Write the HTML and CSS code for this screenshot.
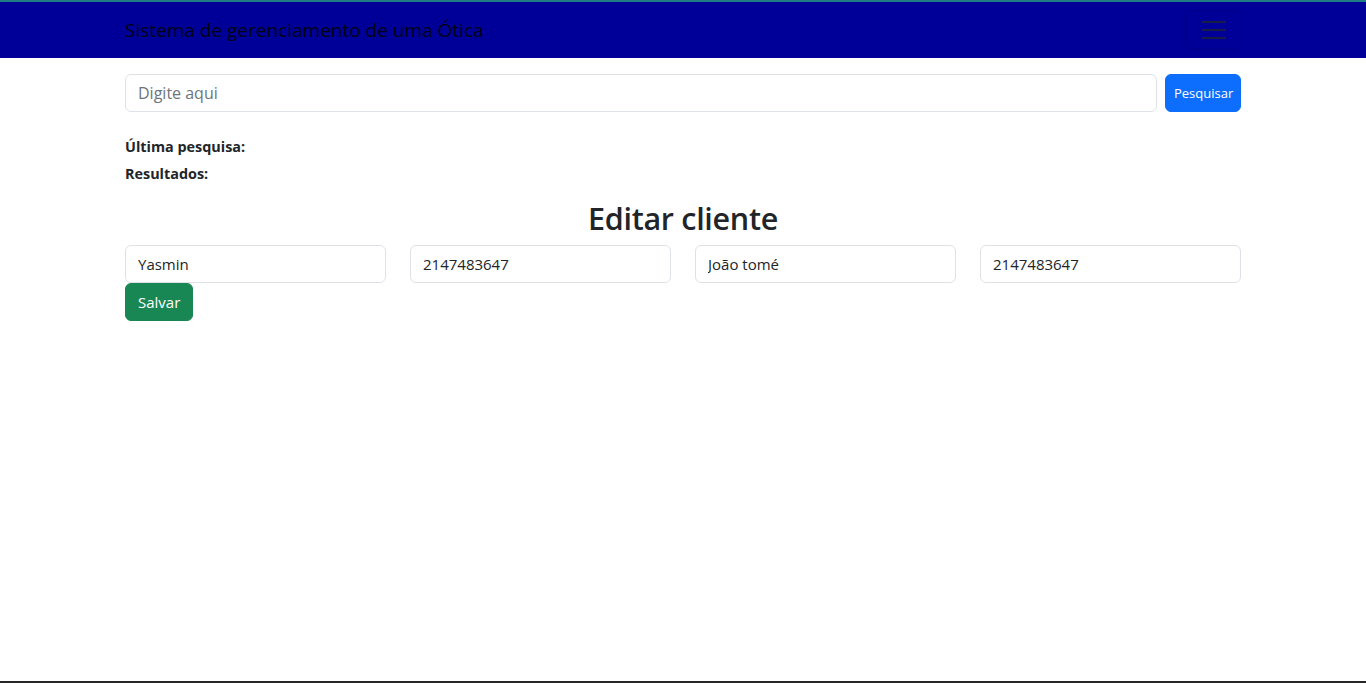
FILE: index.html
```html
<!DOCTYPE html>
<html lang="pt-BR">
<head>
<meta charset="utf-8">
<title>Sistema de gerenciamento de uma Ótica</title>
<link rel="stylesheet" href="styles.css">
</head>
<body>
<nav class="navbar">
  <div class="container nav-inner">
    <a class="brand" href="#">Sistema de gerenciamento de uma Ótica</a>
    <button class="toggler" type="button" aria-label="Menu">
      <span class="toggler-icon"><i></i><i></i><i></i></span>
    </button>
  </div>
</nav>
<main class="container">
  <form class="search">
    <input class="field search-field" type="text" placeholder="Digite aqui">
    <button class="btn btn-primary" type="button">Pesquisar</button>
  </form>
  <div class="info">
    <div class="info-line"><strong>Última pesquisa:</strong></div>
    <div class="info-line"><strong>Resultados:</strong></div>
  </div>
  <h2 class="title">Editar cliente</h2>
  <form class="edit">
    <div class="edit-row">
      <input class="field" type="text" value="Yasmin">
      <input class="field" type="text" value="2147483647">
      <input class="field" type="text" value="João tomé">
      <input class="field" type="text" value="2147483647">
    </div>
    <button class="btn btn-success" type="button">Salvar</button>
  </form>
</main>
<div class="taskbar-edge"></div>
</body>
</html>
```
FILE: styles.css
```css
* { box-sizing: border-box; }
html, body { height: 100%; }
body {
  margin: 0;
  font-family: "Open Sans", "Noto Sans", sans-serif;
  font-size: 16px;
  line-height: 1.5;
  color: #212529;
  background: #fff;
}
.container {
  width: 100%;
  max-width: 1140px;
  margin: 0 auto;
  padding: 0 12px;
}
.navbar {
  background: #000099;
  border-top: 2px solid #1e7b82;
  height: 58px;
}
.nav-inner {
  height: 56px;
  display: flex;
  align-items: center;
  justify-content: space-between;
}
.brand {
  color: rgba(0, 0, 0, 0.9);
  text-decoration: none;
  font-size: 19px;
  line-height: 30px;
}
.toggler {
  width: 56px;
  height: 40px;
  background: transparent;
  border: 1px solid rgba(0, 0, 0, 0.12);
  border-radius: 6px;
  display: flex;
  align-items: center;
  justify-content: center;
  padding: 0;
  margin-right: -1px;
}
.toggler-icon {
  width: 24px;
  height: 18px;
  display: flex;
  flex-direction: column;
  justify-content: space-between;
}
.toggler-icon i {
  display: block;
  height: 2px;
  background: rgba(33, 37, 41, 0.75);
}
.search {
  margin-top: 16px;
  display: flex;
  gap: 8px;
}
.field {
  display: block;
  width: 100%;
  height: 38px;
  padding: 6px 12px;
  font: inherit;
  color: #212529;
  background: #fff;
  border: 1px solid #dee2e6;
  border-radius: 6px;
  outline: none;
}
.field::placeholder { color: #6c757d; }
.search-field { flex: 1; }
.btn {
  height: 38px;
  border: 1px solid transparent;
  border-radius: 6px;
  color: #fff;
  font-family: inherit;
  cursor: pointer;
  white-space: nowrap;
}
.btn-primary {
  background: #0d6efd;
  border-color: #0d6efd;
  font-size: 13px;
  padding: 0 8px;
  width: 76px;
}
.btn-success {
  background: #198754;
  border-color: #198754;
  font-size: 15px;
  padding: 0 12px;
  width: 68px;
}
.info {
  margin-top: 23px;
  display: flex;
  flex-direction: column;
  gap: 3px;
}
.info-line {
  font-size: 14.4px;
  line-height: 24px;
}
.info-line strong { font-weight: 700; }
.title {
  margin: 13px 0 8px;
  text-align: center;
  font-size: 30.5px;
  font-weight: 600;
  line-height: 38px;
  letter-spacing: -0.3px;
}
.edit-row {
  display: grid;
  grid-template-columns: repeat(4, 1fr);
  column-gap: 24px;
}
.edit-row .field { font-size: 15px; }
.taskbar-edge {
  position: fixed;
  left: 0;
  right: 0;
  bottom: 0;
  height: 2px;
  background: #262626;
}
```
